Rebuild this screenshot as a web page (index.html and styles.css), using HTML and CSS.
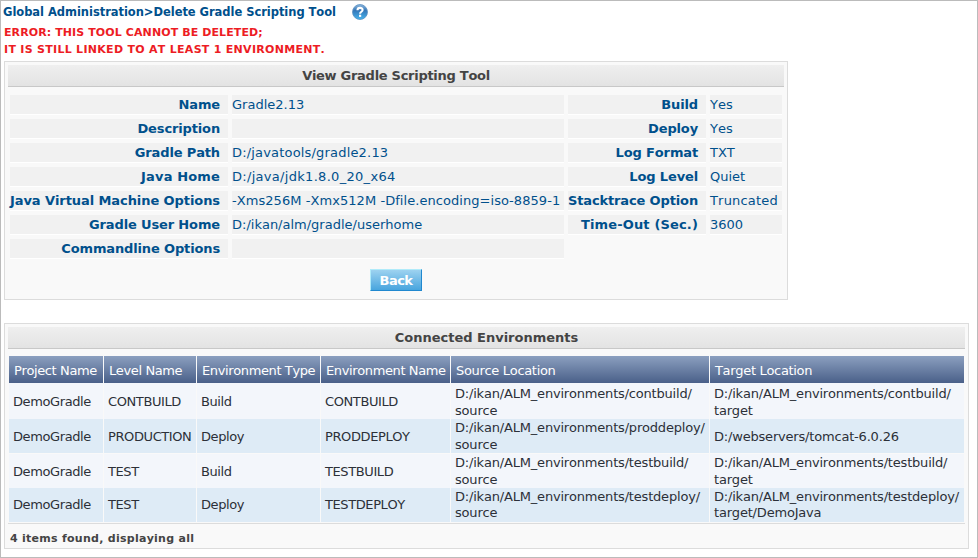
FILE: index.html
```
<!DOCTYPE html>
<html lang="en">
<head>
<meta charset="utf-8">
<title>Delete Gradle Scripting Tool</title>
<link rel="stylesheet" href="styles.css">
</head>
<body>
<header class="crumbs">
  <h1>Global Administration&gt;Delete Gradle Scripting Tool</h1>
  <svg class="help" viewBox="0 0 16 16" width="16" height="16">
    <defs><linearGradient id="ball" x1="0" y1="0" x2="0" y2="1"><stop offset="0" stop-color="#8fb9df"/><stop offset=".4" stop-color="#3577b8"/><stop offset="1" stop-color="#46b4ee"/></linearGradient></defs>
    <circle cx="8" cy="8" r="7.5" fill="url(#ball)" stroke="#5c8fc0" stroke-width=".8"/>
    <path d="M5.5 6.2C5.5 3.1 10.6 3.2 10.6 6C10.6 7.8 8.1 7.7 8.1 9.7" fill="none" stroke="#fff" stroke-width="2.1"/>
    <rect x="7" y="10.7" width="2.2" height="2.2" fill="#fff"/>
  </svg>
</header>
<div class="error"><p>ERROR: THIS TOOL CANNOT BE DELETED;</p><p class="detail">IT IS STILL LINKED TO AT LEAST 1 ENVIRONMENT.</p></div>

<section class="panel tool">
  <h2>View Gradle Scripting Tool</h2>
  <div class="fields">
    <b>Name</b><span>Gradle2.13</span><b>Build</b><span>Yes</span>
    <b>Description</b><span></span><b>Deploy</b><span>Yes</span>
    <b>Gradle Path</b><span class="wide">D:/javatools/gradle2.13</span><b>Log Format</b><span>TXT</span>
    <b class="wide">Java Home</b><span class="wider">D:/java/jdk1.8.0_20_x64</span><b>Log Level</b><span>Quiet</span>
    <b class="machine">Java Virtual Machine Options</b><span class="options">-Xms256M -Xmx512M -Dfile.encoding=iso-8859-1</span><b>Stacktrace Option</b><span class="wide">Truncated</span>
    <b>Gradle User Home</b><span>D:/ikan/alm/gradle/userhome</span><b class="wide">Time-Out (Sec.)</b><span>3600</span>
    <b>Commandline Options</b><span></span>
  </div>
  <button class="back" type="button">Back</button>
</section>

<section class="panel envs">
  <h2>Connected Environments</h2>
  <div class="grid">
    <div class="row head"><div>Project Name</div><div>Level Name</div><div>Environment Type</div><div>Environment Name</div><div class="path">Source Location</div><div class="path">Target Location</div></div>
    <div class="row first"><div>DemoGradle</div><div>CONTBUILD</div><div>Build</div><div>CONTBUILD</div><div class="path">D:/ikan/ALM_environments/contbuild/<br>source</div><div class="path">D:/ikan/ALM_environments/contbuild/<br>target</div></div>
    <div class="row alt"><div>DemoGradle</div><div>PRODUCTION</div><div>Deploy</div><div>PRODDEPLOY</div><div class="path">D:/ikan/ALM_environments/proddeploy/<br>source</div><div class="path">D:/webservers/tomcat-6.0.26</div></div>
    <div class="row third"><div>DemoGradle</div><div>TEST</div><div>Build</div><div>TESTBUILD</div><div class="path">D:/ikan/ALM_environments/testbuild/<br>source</div><div class="path">D:/ikan/ALM_environments/testbuild/<br>target</div></div>
    <div class="row alt last"><div>DemoGradle</div><div>TEST</div><div>Deploy</div><div>TESTDEPLOY</div><div class="path">D:/ikan/ALM_environments/testdeploy/<br>source</div><div class="path">D:/ikan/ALM_environments/testdeploy/<br>target/DemoJava</div></div>
  </div>
  <footer>4 items found, displaying all</footer>
</section>
</body>
</html>
```
FILE: styles.css
```
* { box-sizing: border-box; }
body {
  margin: 0;
  width: 978px;
  height: 558px;
  border: 1px solid #bbb;
  background: #fff;
  font: 13px/17px Verdana, "DejaVu Sans", sans-serif;
  font-kerning: none;
  color: #00508c;
  overflow: hidden;
  white-space: nowrap;
}
h1, h2, p { margin: 0; }
.crumbs { display: flex; align-items: center; gap: 16px; height: 22px; padding-left: 2px; }
h1 { font-size: 11.5px; line-height: 22px; width: 333px; letter-spacing: -0.04px; }
.help { display: block; }
.error { height: 38px; padding: 1px 0 0 3px; font-weight: bold; font-size: 11px; line-height: 17px; letter-spacing: 0.1px; color: #ed1c24; }
.detail { letter-spacing: 0.29px; }
.panel { margin-left: 3px; border: 1px solid #dcdcdc; background: #f9f9f9; padding: 3px; }
.panel h2 {
  height: 22px;
  border-bottom: 1px solid #c8c8c8;
  background: linear-gradient(#efefef, #e3e3e3);
  font-size: 13px;
  line-height: 21px;
  text-align: center;
  color: #444;
}
.tool { width: 784px; height: 239px; }
.tool h2 { letter-spacing: -0.28px; }
.fields {
  display: grid;
  grid-template-columns: 218px 332px 138px 72px;
  grid-auto-rows: 20px;
  gap: 4px;
  padding: 8px 2px 0;
}
.fields b, .fields span { background: #f1f1f1; border-bottom: 1px solid #fff; line-height: 19px; }
.fields b { padding-right: 8px; text-align: right; letter-spacing: -0.14px; }
.fields b.wide { letter-spacing: 0.15px; }
.fields b.machine { letter-spacing: -0.08px; }
.fields .wide { letter-spacing: 0.18px; }
.fields .wider { letter-spacing: 0.3px; }
.fields .options { letter-spacing: 0.06px; }
.back {
  display: block;
  width: 52px;
  height: 22px;
  margin: 10px auto 0;
  padding: 0;
  border: 1px solid;
  border-color: #b0ebfa #2088cf #2088cf #b0ebfa;
  background: linear-gradient(#9dd2f0, #48a5de);
  color: #fff;
  font: bold 13px/21px Verdana, "DejaVu Sans", sans-serif;
  letter-spacing: -0.5px;
}
.envs { width: 965px; height: 226px; margin-top: 23px; }
.grid { padding: 7px 1px 0; height: 174px; }
.row {
  display: grid;
  grid-template-columns: 94px 92px 123px 129px 258px 254px;
  column-gap: 1px;
  height: 34px;
  color: #2c3038;
  letter-spacing: -0.4px;
}
.row div { background: #f3f6fb; border-bottom: 1px solid #f9f9f9; padding-left: 4px; align-content: center; }
.row .path { letter-spacing: -0.19px; }
.row.alt div { background: #deebf6; }
.row.first { height: 36px; }
.row.first div { padding-top: 1px; border: 0; }
.row.alt { height: 35px; }
.row.third div { padding-bottom: 1px; }
.row.last { line-height: 16px; }
.row.head { height: 27px; color: #fff; letter-spacing: -0.38px; }
.row.head .path { letter-spacing: -0.32px; }
.row.head div { background: linear-gradient(#8b9fbf, #4a6089); border: 0; padding: 2px 0 0 5px; }
footer { border-top: 1px solid #dcdcdc; height: 25px; padding: 6px 2px 0; font-size: 11px; font-weight: bold; letter-spacing: 0.27px; color: #444; }
```
